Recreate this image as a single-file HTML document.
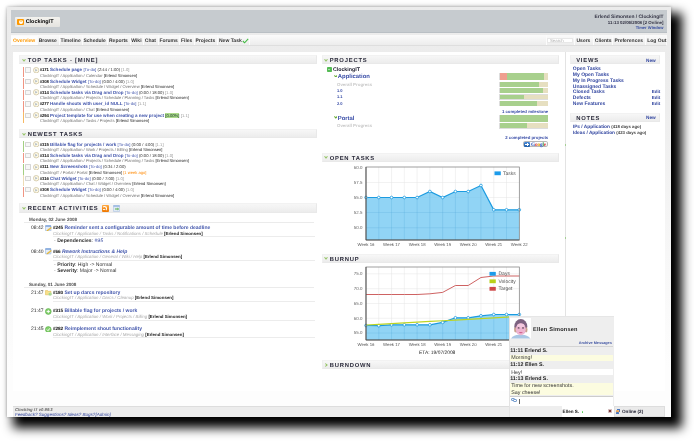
<!DOCTYPE html><html><head><meta charset="utf-8"><title>ClockingIT</title><style>
html,body{margin:0;padding:0;background:#fff;}
body{width:694px;height:441px;overflow:hidden;position:relative;font-family:"Liberation Sans",sans-serif;font-size:4.6px;color:#333;line-height:1.15;text-rendering:geometricPrecision;}
*{box-sizing:border-box;}
.abs,.abs>*{position:absolute;}
#page{position:absolute;left:7.3px;top:7.2px;width:663.5px;height:410.2px;background:linear-gradient(#ebebeb 0,#eeeeee 25%,#f7f7f7 60%,#fdfdfd 88%);box-shadow:8.75px 8.8px 10px 2.4px #000, 0 0 3px rgba(0,0,0,.3);}
#wrap{position:absolute;left:0;top:0;width:694px;height:441px;filter:blur(0.36px);}
#wrap div,#wrap span,#wrap svg{position:absolute;white-space:nowrap;}
#wrap span.i{position:static;}
.hd{background:#c6cbcf;border-bottom:0.5px solid #b9bfc4;}
.nav{background:linear-gradient(#fafafa,#ececec);border:0.4px solid #fafafa;border-bottom:0.6px solid #dedede;}
.tab{font-weight:bold;font-size:5px;color:#333;height:6px;line-height:6px;}
.sep{width:0.5px;background:#fbfbfb;top:35.5px;height:10px;}
.white{background:#fff;}
.sh{background:linear-gradient(#f7f7f7,#ececec);border:0.5px solid #e9e9e9;border-top-color:#f2f2f2;border-left-color:#f0f0f0;}
.st{font-weight:bold;font-size:5.85px;letter-spacing:0.78px;color:#2c2c3c;height:7px;line-height:7px;}
.arr{width:0;height:0;border-left:1.6px solid transparent;border-right:1.6px solid transparent;border-top:2px solid #6a3;}
.arr-r{width:0;height:0;border-top:1.6px solid transparent;border-bottom:1.6px solid transparent;border-left:2px solid #6a3;}
.tt{font-size:4.55px;height:6px;line-height:6px;font-weight:bold;color:#4256ac;}
.tt b{color:#111;font-size:0.94em;letter-spacing:-0.1px;}
.tt i{font-style:normal;font-weight:normal;font-size:4.2px;color:#333;}
.tt u{text-decoration:none;font-weight:normal;font-size:4.2px;color:#999;}
.ts{font-size:4.1px;height:5.4px;line-height:5.4px;color:#707070;}
.ts b{font-weight:normal;color:#222;}
.cb{border:0.5px solid #d6d6d6;background:#f7f7f7;border-radius:0.4px;}
.ck{width:5.2px;height:5.2px;border:0.6px solid #777;border-radius:50%;background:#f4f0d8;}
.bar{width:1px;height:10.6px;}
.lnk{font-size:5px;font-weight:bold;color:#3347a0;height:5.6px;line-height:5.6px;}
</style></head><body>
<div id="page"></div><div id="wrap">
<div class="hd" style="left:11px;top:10.2px;width:655.6px;height:22.5px;"></div>
<div class="" style="left:14.6px;top:16.8px;width:45.4px;height:10px;background:linear-gradient(#f3f2ee,#e4e3df);border-radius:1px;"></div>
<div class="" style="left:17.2px;top:18.6px;width:7px;height:6.5px;background:#f90;border-radius:1px;"><div style="left:1.6px;top:1.3px;width:3.8px;height:3.8px;border-radius:50%;background:#fff;"></div><div style="left:2.4px;top:1.5px;width:2.2px;height:1.6px;border-radius:50%;background:#fc6;"></div></div>
<div class="" style="left:25.7px;top:19px;font-weight:bold;font-size:5.4px;color:#000;letter-spacing:0.02px;font-family:"DejaVu Sans",sans-serif;">ClockingIT</div>
<div class="" style="right:30.5px;top:15px;font-weight:bold;font-size:4.9px;color:#334;">Erlend Simonsen / ClockingIT</div>
<div class="" style="right:30.5px;top:20px;font-weight:bold;font-size:4.4px;color:#334;">11:13 02/06/2008 [2 Online]</div>
<div class="" style="right:30.5px;top:26px;font-weight:bold;font-size:4.1px;color:#3a4fa0;">Timer Window</div>
<div class="nav" style="left:11px;top:35.2px;width:655.6px;height:10.4px;"></div>
<div class="" style="left:11.4px;top:35.6px;width:25.4px;height:9.6px;background:#fdfdfd;"></div>
<div class="tab" style="left:13px;top:38px;color:#f90;">Overview</div>
<div class="tab" style="left:38.75px;top:38px;">Browse</div>
<div class="tab" style="left:60.5px;top:38px;">Timeline</div>
<div class="tab" style="left:83.5px;top:38px;">Schedule</div>
<div class="tab" style="left:109px;top:38px;">Reports</div>
<div class="tab" style="left:131.3px;top:38px;">Wiki</div>
<div class="tab" style="left:144.8px;top:38px;">Chat</div>
<div class="tab" style="left:159.5px;top:38px;">Forums</div>
<div class="tab" style="left:181px;top:38px;">Files</div>
<div class="tab" style="left:195.5px;top:38px;">Projects</div>
<div class="tab" style="left:219px;top:38px;">New Task</div>
<div class="" style="left:36.8px;top:35.4px;width:0.6px;height:10px;background:#fcfcfc;"></div>
<div class="" style="left:58.7px;top:35.4px;width:0.6px;height:10px;background:#fcfcfc;"></div>
<div class="" style="left:81.7px;top:35.4px;width:0.6px;height:10px;background:#fcfcfc;"></div>
<div class="" style="left:107.4px;top:35.4px;width:0.6px;height:10px;background:#fcfcfc;"></div>
<div class="" style="left:129.6px;top:35.4px;width:0.6px;height:10px;background:#fcfcfc;"></div>
<div class="" style="left:143.4px;top:35.4px;width:0.6px;height:10px;background:#fcfcfc;"></div>
<div class="" style="left:157.8px;top:35.4px;width:0.6px;height:10px;background:#fcfcfc;"></div>
<div class="" style="left:179px;top:35.4px;width:0.6px;height:10px;background:#fcfcfc;"></div>
<div class="" style="left:193.8px;top:35.4px;width:0.6px;height:10px;background:#fcfcfc;"></div>
<div class="" style="left:217px;top:35.4px;width:0.6px;height:10px;background:#fcfcfc;"></div>
<div class="" style="left:248.8px;top:35.4px;width:0.6px;height:10px;background:#fcfcfc;"></div>
<div class="" style="left:545.5px;top:35.4px;width:0.6px;height:10px;background:#fcfcfc;"></div>
<div class="" style="left:574.3px;top:35.4px;width:0.6px;height:10px;background:#fcfcfc;"></div>
<div class="" style="left:592.8px;top:35.4px;width:0.6px;height:10px;background:#fcfcfc;"></div>
<div class="" style="left:612.3px;top:35.4px;width:0.6px;height:10px;background:#fcfcfc;"></div>
<div class="" style="left:644.5px;top:35.4px;width:0.6px;height:10px;background:#fcfcfc;"></div>
<svg style="left:241.6px;top:37.6px;width:7px;height:6px" viewBox="0 0 7 6"><path d="M0.8 3 L2.6 4.8 L6.2 0.9" fill="none" stroke="#4b4" stroke-width="1.1"/></svg>
<div class="" style="left:547.4px;top:38.2px;width:26px;height:4.9px;background:#fff;border:0.4px solid #e8e8e8;"><span class="i" style="font-size:4.3px;color:#adadad;position:absolute;left:1.6px;top:0px;line-height:4.2px">Search</span></div>
<div class="tab" style="left:576.5px;top:38px;">Users</div>
<div class="tab" style="left:594.8px;top:38px;">Clients</div>
<div class="tab" style="left:614.4px;top:38px;">Preferences</div>
<div class="tab" style="left:647.2px;top:38px;">Log Out</div>
<div class="white" style="left:13px;top:51.8px;width:552.5px;height:339.4px;"></div>
<div class="" style="left:564.8px;top:51.8px;width:1px;height:339.4px;background:#e3e3e3;"></div>
<div class="white" style="left:566px;top:51.8px;width:99px;height:339.4px;"></div>
<div class="sh" style="left:19.2px;top:54.8px;width:297.6px;height:9.4px;"></div>
<svg style="left:21.8px;top:58.5px;width:4px;height:3px" viewBox="0 0 4 3"><path d="M0.2 0.3 L2 1.1 L3.8 0.3 L2 2.6 Z" fill="#8cc05a" stroke="#8cc05a" stroke-width="0.3"/></svg>
<div class="st" style="left:27.7px;top:58px;">TOP TASKS - [MINE]</div>
<div class="sh" style="left:19.2px;top:129.0px;width:297.6px;height:9.4px;"></div>
<svg style="left:21.8px;top:132.7px;width:4px;height:3px" viewBox="0 0 4 3"><path d="M0.2 0.3 L2 1.1 L3.8 0.3 L2 2.6 Z" fill="#8cc05a" stroke="#8cc05a" stroke-width="0.3"/></svg>
<div class="st" style="left:27.7px;top:132px;">NEWEST TASKS</div>
<div class="sh" style="left:19.2px;top:203.4px;width:297.6px;height:9.4px;"></div>
<svg style="left:21.8px;top:207.1px;width:4px;height:3px" viewBox="0 0 4 3"><path d="M0.2 0.3 L2 1.1 L3.8 0.3 L2 2.6 Z" fill="#8cc05a" stroke="#8cc05a" stroke-width="0.3"/></svg>
<div class="st" style="left:27.7px;top:206px;">RECENT ACTIVITIES</div>
<div class="sh" style="left:321.5px;top:54.8px;width:237px;height:9.4px;"></div>
<svg style="left:324.1px;top:58.5px;width:4px;height:3px" viewBox="0 0 4 3"><path d="M0.2 0.3 L2 1.1 L3.8 0.3 L2 2.6 Z" fill="#8cc05a" stroke="#8cc05a" stroke-width="0.3"/></svg>
<div class="st" style="left:329.7px;top:58px;">PROJECTS</div>
<div class="sh" style="left:321.5px;top:152.7px;width:237px;height:9.4px;"></div>
<svg style="left:324.1px;top:156.4px;width:4px;height:3px" viewBox="0 0 4 3"><path d="M0.2 0.3 L2 1.1 L3.8 0.3 L2 2.6 Z" fill="#8cc05a" stroke="#8cc05a" stroke-width="0.3"/></svg>
<div class="st" style="left:329.7px;top:156px;">OPEN TASKS</div>
<div class="sh" style="left:321.5px;top:253.5px;width:237px;height:9.4px;"></div>
<svg style="left:324.1px;top:257.2px;width:4px;height:3px" viewBox="0 0 4 3"><path d="M0.2 0.3 L2 1.1 L3.8 0.3 L2 2.6 Z" fill="#8cc05a" stroke="#8cc05a" stroke-width="0.3"/></svg>
<div class="st" style="left:329.7px;top:257px;">BURNUP</div>
<div class="sh" style="left:321.5px;top:359.9px;width:237px;height:9.4px;"></div>
<svg style="left:324.9px;top:362.6px;width:3px;height:4px" viewBox="0 0 3 4"><path d="M0.3 0.2 L2.6 2 L0.3 3.8 L1.1 2 Z" fill="#8cc05a" stroke="#8cc05a" stroke-width="0.3"/></svg>
<div class="st" style="left:329.7px;top:363px;">BURNDOWN</div>
<div class="" style="left:22.5px;top:66.85px;width:1.7px;height:10.6px;background:#f09482;"></div>
<div class="cb" style="left:25.3px;top:67.35px;width:5.5px;height:5.3px;"></div>
<svg style="left:32.6px;top:66.75px;width:6.4px;height:6.4px" viewBox="0 0 6.4 6.4"><circle cx="3.2" cy="3.2" r="2.75" fill="#fffae6" stroke="#bcae86" stroke-width="0.55"/><path d="M2.5 2.2 L4.2 3.2 L2.5 4.2 Z" fill="#b4c4d4" stroke="#8a9cb0" stroke-width="0.3"/></svg>
<div class="tt" style="left:39.7px;top:67px;"><b>#171</b> Schedule page <i style="color:#4256ac">[To-do]</i> <i>(2:44 / 1:00)</i> <u>[1.0]</u></div>
<div class="ts" style="left:40px;top:73px;">ClockingIT / Application / Calendar <b>[Erlend Simonsen]</b></div>
<div class="" style="left:22.5px;top:78.21px;width:1.7px;height:10.6px;background:#f09482;"></div>
<div class="cb" style="left:25.3px;top:78.71px;width:5.5px;height:5.3px;"></div>
<svg style="left:32.6px;top:78.11px;width:6.4px;height:6.4px" viewBox="0 0 6.4 6.4"><circle cx="3.2" cy="3.2" r="2.75" fill="#fffae6" stroke="#bcae86" stroke-width="0.55"/><path d="M2.5 2.2 L4.2 3.2 L2.5 4.2 Z" fill="#b4c4d4" stroke="#8a9cb0" stroke-width="0.3"/></svg>
<div class="tt" style="left:39.7px;top:79px;"><b>#308</b> Schedule Widget <i style="color:#4256ac">[To-do]</i> <i>(0:00 / 4:00)</i> <u>[1.0]</u></div>
<div class="ts" style="left:40px;top:84px;">ClockingIT / Application / Schedule / Widget / Overview <b>[Erlend Simonsen]</b></div>
<div class="" style="left:22.5px;top:89.57px;width:1.7px;height:10.6px;background:#f09482;"></div>
<div class="cb" style="left:25.3px;top:90.07px;width:5.5px;height:5.3px;"></div>
<svg style="left:32.6px;top:89.47px;width:6.4px;height:6.4px" viewBox="0 0 6.4 6.4"><circle cx="3.2" cy="3.2" r="2.75" fill="#fffae6" stroke="#bcae86" stroke-width="0.55"/><path d="M2.5 2.2 L4.2 3.2 L2.5 4.2 Z" fill="#b4c4d4" stroke="#8a9cb0" stroke-width="0.3"/></svg>
<div class="tt" style="left:39.7px;top:90px;"><b>#314</b> Schedule tasks via Drag and Drop <i style="color:#4256ac">[To-do]</i> <i>(0:00 / 18:00)</i> <u>[1.0]</u></div>
<div class="ts" style="left:40px;top:95px;">ClockingIT / Application / Projects / Schedule / Planning / Tasks <b>[Erlend Simonsen]</b></div>
<div class="" style="left:22.5px;top:100.93px;width:1.7px;height:10.6px;background:#f09482;"></div>
<div class="cb" style="left:25.3px;top:101.43px;width:5.5px;height:5.3px;"></div>
<svg style="left:32.6px;top:100.83px;width:6.4px;height:6.4px" viewBox="0 0 6.4 6.4"><circle cx="3.2" cy="3.2" r="2.75" fill="#fffae6" stroke="#bcae86" stroke-width="0.55"/><path d="M2.5 2.2 L4.2 3.2 L2.5 4.2 Z" fill="#b4c4d4" stroke="#8a9cb0" stroke-width="0.3"/></svg>
<div class="tt" style="left:39.7px;top:101px;"><b>#277</b> Handle shouts with user_id NULL <i style="color:#4256ac">[To-do]</i> <u>[1.1]</u></div>
<div class="ts" style="left:40px;top:107px;">ClockingIT / Application / Chat <b>[Erlend Simonsen]</b></div>
<div class="" style="left:22.5px;top:112.29px;width:1.7px;height:10.6px;background:#f6b964;"></div>
<div class="cb" style="left:25.3px;top:112.79px;width:5.5px;height:5.3px;"></div>
<svg style="left:32.6px;top:112.19px;width:6.4px;height:6.4px" viewBox="0 0 6.4 6.4"><circle cx="3.2" cy="3.2" r="2.75" fill="#fffae6" stroke="#bcae86" stroke-width="0.55"/><path d="M2.5 2.2 L4.2 3.2 L2.5 4.2 Z" fill="#b4c4d4" stroke="#8a9cb0" stroke-width="0.3"/></svg>
<div class="tt" style="left:39.7px;top:113px;"><b>#294</b> Project template for use when creating a new project <i style="background:#addb8b;color:#243;">[0.00%]</i> <u>[1.1]</u></div>
<div class="ts" style="left:40px;top:118px;">ClockingIT / Application / Tasks / Projects <b>[Erlend Simonsen]</b></div>
<div class="" style="left:22.5px;top:141.2px;width:1.7px;height:10.6px;background:#a3cf82;"></div>
<div class="cb" style="left:25.3px;top:141.7px;width:5.5px;height:5.3px;"></div>
<svg style="left:32.6px;top:141.1px;width:6.4px;height:6.4px" viewBox="0 0 6.4 6.4"><circle cx="3.2" cy="3.2" r="2.75" fill="#fffae6" stroke="#bcae86" stroke-width="0.55"/><path d="M2.5 2.2 L4.2 3.2 L2.5 4.2 Z" fill="#b4c4d4" stroke="#8a9cb0" stroke-width="0.3"/></svg>
<div class="tt" style="left:39.7px;top:142px;"><b>#315</b> Billable flag for projects / work <i style="color:#4256ac">[To-do]</i> <i>(0:00 / 4:00)</i> <u>[1.1]</u></div>
<div class="ts" style="left:40px;top:147px;">ClockingIT / Application / Work / Projects / Billing <b>[Erlend Simonsen]</b></div>
<div class="" style="left:22.5px;top:152.56px;width:1.7px;height:10.6px;background:#f09482;"></div>
<div class="cb" style="left:25.3px;top:153.06px;width:5.5px;height:5.3px;"></div>
<svg style="left:32.6px;top:152.46px;width:6.4px;height:6.4px" viewBox="0 0 6.4 6.4"><circle cx="3.2" cy="3.2" r="2.75" fill="#fffae6" stroke="#bcae86" stroke-width="0.55"/><path d="M2.5 2.2 L4.2 3.2 L2.5 4.2 Z" fill="#b4c4d4" stroke="#8a9cb0" stroke-width="0.3"/></svg>
<div class="tt" style="left:39.7px;top:153px;"><b>#314</b> Schedule tasks via Drag and Drop <i style="color:#4256ac">[To-do]</i> <i>(0:00 / 18:00)</i> <u>[1.0]</u></div>
<div class="ts" style="left:40px;top:158px;">ClockingIT / Application / Projects / Schedule / Planning / Tasks <b>[Erlend Simonsen]</b></div>
<div class="" style="left:22.5px;top:163.92px;width:1.7px;height:10.6px;background:#a3cf82;"></div>
<div class="cb" style="left:25.3px;top:164.42px;width:5.5px;height:5.3px;"></div>
<svg style="left:32.6px;top:163.82px;width:6.4px;height:6.4px" viewBox="0 0 6.4 6.4"><circle cx="3.2" cy="3.2" r="2.75" fill="#fffae6" stroke="#bcae86" stroke-width="0.55"/><path d="M2.5 2.2 L4.2 3.2 L2.5 4.2 Z" fill="#b4c4d4" stroke="#8a9cb0" stroke-width="0.3"/></svg>
<div class="tt" style="left:39.7px;top:164px;"><b>#311</b> <em>New Screenshots</em> <i style="color:#4256ac">[To-do]</i> <i>(0:34 / 2:00)</i></div>
<div class="ts" style="left:40px;top:170px;">ClockingIT / Portal / Portal <b>[Erlend Simonsen]</b> <span class="i" style="color:#f80">[1 week ago]</span></div>
<div class="" style="left:22.5px;top:175.28px;width:1.7px;height:10.6px;background:#ecdcb6;"></div>
<div class="cb" style="left:25.3px;top:175.78px;width:5.5px;height:5.3px;"></div>
<svg style="left:32.6px;top:175.18px;width:6.4px;height:6.4px" viewBox="0 0 6.4 6.4"><circle cx="3.2" cy="3.2" r="2.75" fill="#fffae6" stroke="#bcae86" stroke-width="0.55"/><path d="M2.5 2.2 L4.2 3.2 L2.5 4.2 Z" fill="#b4c4d4" stroke="#8a9cb0" stroke-width="0.3"/></svg>
<div class="tt" style="left:39.7px;top:176px;"><b>#316</b> Chat Widget <i style="color:#4256ac">[To-do]</i> <i>(0:00 / 7:00)</i> <u>[1.0]</u></div>
<div class="ts" style="left:40px;top:181px;">ClockingIT / Application / Chat / Widget / Overview <b>[Erlend Simonsen]</b></div>
<div class="" style="left:22.5px;top:186.64px;width:1.7px;height:10.6px;background:#f09482;"></div>
<div class="cb" style="left:25.3px;top:187.14px;width:5.5px;height:5.3px;"></div>
<svg style="left:32.6px;top:186.54px;width:6.4px;height:6.4px" viewBox="0 0 6.4 6.4"><circle cx="3.2" cy="3.2" r="2.75" fill="#fffae6" stroke="#bcae86" stroke-width="0.55"/><path d="M2.5 2.2 L4.2 3.2 L2.5 4.2 Z" fill="#b4c4d4" stroke="#8a9cb0" stroke-width="0.3"/></svg>
<div class="tt" style="left:39.7px;top:187px;"><b>#308</b> Schedule Widget <i style="color:#4256ac">[To-do]</i> <i>(0:00 / 4:00)</i> <u>[1.0]</u></div>
<div class="ts" style="left:40px;top:193px;">ClockingIT / Application / Schedule / Widget / Overview <b>[Erlend Simonsen]</b></div>
<div class="" style="left:102px;top:204.7px;width:7px;height:7px;background:linear-gradient(#fa4,#e70);border-radius:1px;"><div style="left:1.2px;top:4.4px;width:1.4px;height:1.4px;border-radius:50%;background:#fff"></div><div style="left:0.2px;top:1.6px;width:5px;height:5px;border:0.8px solid #fff;border-radius:50%;border-left-color:transparent;border-bottom-color:transparent;transform:rotate(0deg)"></div></div>
<svg style="left:113px;top:205px;width:7px;height:7px" viewBox="0 0 7 7"><rect x="0.4" y="0.4" width="6.2" height="6.2" rx="0.6" fill="#dfe9f6" stroke="#9db7dc" stroke-width="0.5"/><rect x="0.4" y="0.4" width="6.2" height="1.3" fill="#8fb0de"/><path d="M2 3.6 H4.6 V2.6 L6 4.1 L4.6 5.6 V4.6 H2 Z" fill="#5bb04a"/></svg>
<div class="" style="left:29px;top:217px;font-size:4.6px;font-weight:bold;color:#555;">Monday, 02 June 2008</div>
<div class="" style="left:24px;top:221.8px;width:290px;height:0.5px;background:#ebebeb;"></div>
<div class="" style="left:31px;top:226px;font-size:5px;color:#222;">08:42</div>
<svg style="left:45px;top:224.9px;width:6.8px;height:6.6px" viewBox="0 0 6.8 6.6"><rect x="0.4" y="0.5" width="5.6" height="5.4" rx="0.5" fill="#e3edf9" stroke="#7fa3d6" stroke-width="0.5"/><rect x="0.4" y="0.5" width="5.6" height="1.2" fill="#6f9ad8"/><path d="M2 5.2 L5.8 2.2 L6.5 3 L2.8 5.9 L1.7 6.1 Z" fill="#f4c22e" stroke="#c8962a" stroke-width="0.25"/></svg>
<div class="tt" style="left:53px;top:225px;font-size:5px;"><b>#245</b> Reminder sent a configurable amount of time before deadline</div>
<div class="ts" style="left:53px;top:231px;font-size:4.38px;"><em style="color:#aaa">ClockingIT / Application / Tasks / Notifications / Schedule</em> <b style="font-weight:bold">[Erlend Simonsen]</b></div>
<div class="" style="left:53px;top:236.3px;width:262px;height:0.5px;background:#ececec;"></div>
<div class="" style="left:54px;top:239px;font-size:5.1px;color:#333;">- <b>Dependencies</b>: <span class="i" style="color:#3347a0;font-style:italic">#95</span></div>
<div class="" style="left:31px;top:250px;font-size:5px;color:#222;">08:40</div>
<svg style="left:45px;top:248.2px;width:6.8px;height:6.6px" viewBox="0 0 6.8 6.6"><rect x="0.4" y="0.5" width="5.6" height="5.4" rx="0.5" fill="#e3edf9" stroke="#7fa3d6" stroke-width="0.5"/><rect x="0.4" y="0.5" width="5.6" height="1.2" fill="#6f9ad8"/><path d="M2 5.2 L5.8 2.2 L6.5 3 L2.8 5.9 L1.7 6.1 Z" fill="#f4c22e" stroke="#c8962a" stroke-width="0.25"/></svg>
<div class="tt" style="left:53px;top:249px;font-size:5px;"><b>#66</b> <em>Rework Instructions &amp; Help</em></div>
<div class="ts" style="left:53px;top:254px;font-size:4.38px;"><em style="color:#aaa">ClockingIT / Application / General / Wiki / Help</em> <b style="font-weight:bold">[Erlend Simonsen]</b></div>
<div class="" style="left:53px;top:259.6px;width:262px;height:0.5px;background:#ececec;"></div>
<div class="" style="left:54px;top:263px;font-size:5.1px;color:#333;">- <b>Priority</b>: High -&gt; Normal</div>
<div class="" style="left:54px;top:269px;font-size:5.1px;color:#333;">- <b>Severity</b>: Major -&gt; Normal</div>
<div class="" style="left:29px;top:282px;font-size:4.6px;font-weight:bold;color:#555;">Sunday, 01 June 2008</div>
<div class="" style="left:24px;top:286.7px;width:290px;height:0.5px;background:#ebebeb;"></div>
<div class="" style="left:31px;top:291px;font-size:5px;color:#222;">21:47</div>
<svg style="left:45px;top:289.3px;width:7px;height:6.8px" viewBox="0 0 7 6.8"><path d="M0.4 1.6 H2.6 L3.2 2.3 H6 V5.8 H0.4 Z" fill="#f8e08a" stroke="#d9b13a" stroke-width="0.45"/><circle cx="5.1" cy="5" r="1.6" fill="#6cc04a" stroke="#fff" stroke-width="0.3"/><path d="M5.1 4.1 V5.9 M4.2 5 H6" stroke="#fff" stroke-width="0.5"/></svg>
<div class="tt" style="left:53px;top:290px;font-size:5px;"><b>#180</b> Set up darcs repository</div>
<div class="ts" style="left:53px;top:295px;font-size:4.38px;"><em style="color:#aaa">ClockingIT / Application / Darcs / Cleanup</em> <b style="font-weight:bold">[Erlend Simonsen]</b></div>
<div class="" style="left:53px;top:300.7px;width:262px;height:0.5px;background:#ececec;"></div>
<div class="" style="left:31px;top:309px;font-size:5px;color:#222;">21:47</div>
<svg style="left:45.1px;top:308.1px;width:6.8px;height:6.8px" viewBox="0 0 6.8 6.8"><circle cx="3.3" cy="3.5" r="2.9" fill="#86d070" stroke="#4fa83c" stroke-width="0.55"/><path d="M3.3 1.9 V5.1 M1.7 3.5 H4.9" stroke="#fff" stroke-width="0.9"/></svg>
<div class="tt" style="left:53px;top:308px;font-size:5px;"><b>#315</b> Billable flag for projects / work</div>
<div class="ts" style="left:53px;top:314px;font-size:4.38px;"><em style="color:#aaa">ClockingIT / Application / Work / Projects / Billing</em> <b style="font-weight:bold">[Erlend Simonsen]</b></div>
<div class="" style="left:53px;top:319.5px;width:262px;height:0.5px;background:#ececec;"></div>
<div class="" style="left:31px;top:327px;font-size:5px;color:#222;">21:45</div>
<svg style="left:45.1px;top:325.6px;width:6.8px;height:6.8px" viewBox="0 0 6.8 6.8"><circle cx="3.3" cy="3.5" r="2.9" fill="#86d070" stroke="#4fa83c" stroke-width="0.55"/><path d="M1.9 3.6 L3 4.7 L4.8 2.3" fill="none" stroke="#fff" stroke-width="0.9"/></svg>
<div class="tt" style="left:53px;top:326px;font-size:5px;"><b>#282</b> Reimplement shout functionality</div>
<div class="ts" style="left:53px;top:332px;font-size:4.38px;"><em style="color:#aaa">ClockingIT / Application / Interface / Messaging</em> <b style="font-weight:bold">[Erlend Simonsen]</b></div>
<div class="" style="left:53px;top:337px;width:262px;height:0.5px;background:#ececec;"></div>
<div class="" style="left:326.5px;top:67px;width:5px;height:5px;background:#5b5;border-radius:0.8px;"><div style="left:1.2px;top:1.6px;width:0;height:0;border-left:1.3px solid transparent;border-right:1.3px solid transparent;border-top:1.6px solid #fff"></div></div>
<div class="" style="left:332.9px;top:67px;font-weight:bold;font-size:5.3px;color:#223;">ClockingIT</div>
<svg style="left:333.7px;top:74.7px;width:3.6px;height:2.6px" viewBox="0 0 3.6 2.6"><path d="M0.4 0.4 L1.8 2 L3.2 0.4" fill="none" stroke="#6a3" stroke-width="1.05"/></svg>
<div class="" style="left:337.8px;top:74px;font-size:5.9px;font-weight:bold;color:#3b4fa8;">Application</div>
<div class="" style="left:337px;top:82px;font-size:4.4px;font-weight:bold;color:#c8c8c8;">Overall Progress</div>
<div class="" style="left:337px;top:89px;font-size:4px;font-weight:bold;color:#3b4fa8;">1.0</div>
<div class="" style="left:337px;top:95px;font-size:4px;font-weight:bold;color:#3b4fa8;">1.1</div>
<div class="" style="left:337px;top:102px;font-size:4px;font-weight:bold;color:#3b4fa8;">2.0</div>
<svg style="left:333.7px;top:116.4px;width:3.6px;height:2.6px" viewBox="0 0 3.6 2.6"><path d="M0.4 0.4 L1.8 2 L3.2 0.4" fill="none" stroke="#6a3" stroke-width="1.05"/></svg>
<div class="" style="left:337.8px;top:116px;font-size:5.9px;font-weight:bold;color:#3b4fa8;">Portal</div>
<div class="" style="left:337px;top:123px;font-size:4.4px;font-weight:bold;color:#c8c8c8;">Overall Progress</div>
<div class="" style="left:499.1px;top:72.6px;width:49px;height:7.8px;background:#ddd;"></div>
<div class="" style="left:499.5px;top:73px;width:7.0px;height:7px;background:#ef9f8f;"></div>
<div class="" style="left:506.5px;top:73px;width:37.299999999999955px;height:7px;background:#a8d08d;"></div>
<div class="" style="left:543.8px;top:73px;width:4.0px;height:7px;background:#e6dfc0;"></div>
<div class="" style="left:499.1px;top:81.6px;width:49px;height:5.3999999999999995px;background:#ddd;"></div>
<div class="" style="left:499.5px;top:82px;width:39.5px;height:4.6px;background:#a8d08d;"></div>
<div class="" style="left:539px;top:82px;width:8.799999999999955px;height:4.6px;background:#e6dfc0;"></div>
<div class="" style="left:499.1px;top:87.8px;width:49px;height:5.3999999999999995px;background:#ddd;"></div>
<div class="" style="left:499.5px;top:88.2px;width:43.5px;height:4.6px;background:#a8d08d;"></div>
<div class="" style="left:543px;top:88.2px;width:4.7999999999999545px;height:4.6px;background:#e6dfc0;"></div>
<div class="" style="left:499.1px;top:94.39999999999999px;width:49px;height:5.3999999999999995px;background:#ddd;"></div>
<div class="" style="left:499.5px;top:94.8px;width:24.799999999999955px;height:4.6px;background:#a8d08d;"></div>
<div class="" style="left:524.3px;top:94.8px;width:23.5px;height:4.6px;background:#e6dfc0;"></div>
<div class="" style="left:499.1px;top:100.89999999999999px;width:49px;height:5.3999999999999995px;background:#ddd;"></div>
<div class="" style="left:499.5px;top:101.3px;width:37.299999999999955px;height:4.6px;background:#a8d08d;"></div>
<div class="" style="left:536.8px;top:101.3px;width:11.0px;height:4.6px;background:#e6dfc0;"></div>
<div class="" style="right:145.79999999999995px;top:110px;font-size:4.3px;font-weight:bold;color:#3b4fa8;">1 completed milestone</div>
<div class="" style="left:499.1px;top:114.6px;width:49px;height:7.6px;background:#ddd;"></div>
<div class="" style="left:499.5px;top:115px;width:48.299999999999955px;height:6.8px;background:#a8d08d;"></div>
<div class="" style="left:499.1px;top:123.0px;width:49px;height:5.6px;background:#ddd;"></div>
<div class="" style="left:499.5px;top:123.4px;width:27.299999999999955px;height:4.8px;background:#a8d08d;"></div>
<div class="" style="left:526.8px;top:123.4px;width:21.0px;height:4.8px;background:#e6dfc0;"></div>
<div class="" style="right:145.79999999999995px;top:136px;font-size:4.3px;font-weight:bold;color:#3b4fa8;">2 completed projects</div>
<div class="" style="left:523px;top:140.5px;width:25.4px;height:6.9px;background:linear-gradient(#fff,#ececec);border:0.6px solid #b8b8b8;border-radius:1.8px;"><div style="left:0.2px;top:0.2px;width:5.6px;height:5.4px;background:linear-gradient(#4a8ad8,#1f5fa8);border-radius:1px"></div><div style="left:2.6px;top:1.2px;width:0.9px;height:3.4px;background:#fff"></div><div style="left:1.3px;top:2.45px;width:3.4px;height:0.9px;background:#fff"></div></div>
<div class="" style="left:530.9px;top:142px;font-size:5.3px;font-weight:bold;letter-spacing:-0.12px;font-family:'Liberation Serif',serif;"><span class="i" style="color:#2a56c6">G</span><span class="i" style="color:#d33">o</span><span class="i" style="color:#e8a800">o</span><span class="i" style="color:#2a56c6">g</span><span class="i" style="color:#2a9a3a">l</span><span class="i" style="color:#d33">e</span></div>
<div class="arr-r" style="left:565px;top:144px;width:0px;height:0px;border-left-color:#6b4;border-top-width:1.2px;border-bottom-width:1.2px;border-left-width:1.4px;"></div>
<div class="arr-r" style="left:565px;top:237.4px;width:0px;height:0px;border-left-color:#6b4;border-top-width:1.2px;border-bottom-width:1.2px;border-left-width:1.4px;"></div>
<svg style="left:335.5px;top:162px;width:213.29999999999995px;height:93px" viewBox="-30 -5 213.29999999999995 93"><rect x="0" y="0" width="153.29999999999995" height="73" fill="#fff"/><line x1="12.77" y1="0" x2="12.77" y2="73" stroke="#e4e4e4" stroke-width="0.5"/><line x1="25.55" y1="0" x2="25.55" y2="73" stroke="#e4e4e4" stroke-width="0.5"/><line x1="38.32" y1="0" x2="38.32" y2="73" stroke="#e4e4e4" stroke-width="0.5"/><line x1="51.10" y1="0" x2="51.10" y2="73" stroke="#e4e4e4" stroke-width="0.5"/><line x1="63.87" y1="0" x2="63.87" y2="73" stroke="#e4e4e4" stroke-width="0.5"/><line x1="76.65" y1="0" x2="76.65" y2="73" stroke="#e4e4e4" stroke-width="0.5"/><line x1="89.42" y1="0" x2="89.42" y2="73" stroke="#e4e4e4" stroke-width="0.5"/><line x1="102.20" y1="0" x2="102.20" y2="73" stroke="#e4e4e4" stroke-width="0.5"/><line x1="114.97" y1="0" x2="114.97" y2="73" stroke="#e4e4e4" stroke-width="0.5"/><line x1="127.75" y1="0" x2="127.75" y2="73" stroke="#e4e4e4" stroke-width="0.5"/><line x1="140.52" y1="0" x2="140.52" y2="73" stroke="#e4e4e4" stroke-width="0.5"/><line x1="0" y1="15.50" x2="153.29999999999995" y2="15.50" stroke="#e4e4e4" stroke-width="0.5"/><line x1="0" y1="30.50" x2="153.29999999999995" y2="30.50" stroke="#e4e4e4" stroke-width="0.5"/><line x1="0" y1="45.50" x2="153.29999999999995" y2="45.50" stroke="#e4e4e4" stroke-width="0.5"/><line x1="0" y1="60.70" x2="153.29999999999995" y2="60.70" stroke="#e4e4e4" stroke-width="0.5"/><polygon points="0,73 0.00,30.50 12.77,30.50 25.55,30.50 38.32,30.50 51.10,30.50 63.87,24.50 76.65,30.50 89.42,24.50 102.20,24.50 114.97,18.50 127.75,42.80 140.52,42.80 153.30,42.80 153.29999999999995,73" fill="#6cc6f2" fill-opacity="0.75"/><line x1="12.77" y1="30.50" x2="12.77" y2="73" stroke="#2a8fd0" stroke-opacity="0.28" stroke-width="0.5"/><line x1="25.55" y1="30.50" x2="25.55" y2="73" stroke="#2a8fd0" stroke-opacity="0.28" stroke-width="0.5"/><line x1="38.32" y1="30.50" x2="38.32" y2="73" stroke="#2a8fd0" stroke-opacity="0.28" stroke-width="0.5"/><line x1="51.10" y1="30.50" x2="51.10" y2="73" stroke="#2a8fd0" stroke-opacity="0.28" stroke-width="0.5"/><line x1="63.87" y1="24.50" x2="63.87" y2="73" stroke="#2a8fd0" stroke-opacity="0.28" stroke-width="0.5"/><line x1="76.65" y1="30.50" x2="76.65" y2="73" stroke="#2a8fd0" stroke-opacity="0.28" stroke-width="0.5"/><line x1="89.42" y1="24.50" x2="89.42" y2="73" stroke="#2a8fd0" stroke-opacity="0.28" stroke-width="0.5"/><line x1="102.20" y1="24.50" x2="102.20" y2="73" stroke="#2a8fd0" stroke-opacity="0.28" stroke-width="0.5"/><line x1="114.97" y1="18.50" x2="114.97" y2="73" stroke="#2a8fd0" stroke-opacity="0.28" stroke-width="0.5"/><line x1="127.75" y1="42.80" x2="127.75" y2="73" stroke="#2a8fd0" stroke-opacity="0.28" stroke-width="0.5"/><line x1="140.52" y1="42.80" x2="140.52" y2="73" stroke="#2a8fd0" stroke-opacity="0.28" stroke-width="0.5"/><line x1="0" y1="45.50" x2="153.29999999999995" y2="45.50" stroke="#2a8fd0" stroke-opacity="0.22" stroke-width="0.5"/><line x1="0" y1="60.70" x2="153.29999999999995" y2="60.70" stroke="#2a8fd0" stroke-opacity="0.22" stroke-width="0.5"/><polyline points="0.00,30.50 12.77,30.50 25.55,30.50 38.32,30.50 51.10,30.50 63.87,24.50 76.65,30.50 89.42,24.50 102.20,24.50 114.97,18.50 127.75,42.80 140.52,42.80 153.30,42.80" fill="none" stroke="#1c9be0" stroke-width="1.2"/><circle cx="0.00" cy="30.50" r="1.35" fill="#fff" stroke="#1c9be0" stroke-width="0.8"/><circle cx="12.77" cy="30.50" r="1.35" fill="#fff" stroke="#1c9be0" stroke-width="0.8"/><circle cx="25.55" cy="30.50" r="1.35" fill="#fff" stroke="#1c9be0" stroke-width="0.8"/><circle cx="38.32" cy="30.50" r="1.35" fill="#fff" stroke="#1c9be0" stroke-width="0.8"/><circle cx="51.10" cy="30.50" r="1.35" fill="#fff" stroke="#1c9be0" stroke-width="0.8"/><circle cx="63.87" cy="24.50" r="1.35" fill="#fff" stroke="#1c9be0" stroke-width="0.8"/><circle cx="76.65" cy="30.50" r="1.35" fill="#fff" stroke="#1c9be0" stroke-width="0.8"/><circle cx="89.42" cy="24.50" r="1.35" fill="#fff" stroke="#1c9be0" stroke-width="0.8"/><circle cx="102.20" cy="24.50" r="1.35" fill="#fff" stroke="#1c9be0" stroke-width="0.8"/><circle cx="114.97" cy="18.50" r="1.35" fill="#fff" stroke="#1c9be0" stroke-width="0.8"/><circle cx="127.75" cy="42.80" r="1.35" fill="#fff" stroke="#1c9be0" stroke-width="0.8"/><circle cx="140.52" cy="42.80" r="1.35" fill="#fff" stroke="#1c9be0" stroke-width="0.8"/><circle cx="153.30" cy="42.80" r="1.35" fill="#fff" stroke="#1c9be0" stroke-width="0.8"/><rect x="0" y="0" width="153.29999999999995" height="73" fill="none" stroke="#777" stroke-width="0.7"/><path d="M0 0 V73 H153.29999999999995" fill="none" stroke="#444" stroke-width="0.8"/><text x="-3.6" y="1.50" font-size="4.4" fill="#666" text-anchor="end" font-family="Liberation Sans, sans-serif">60.0</text><text x="-3.6" y="17.00" font-size="4.4" fill="#666" text-anchor="end" font-family="Liberation Sans, sans-serif">57.5</text><text x="-3.6" y="32.00" font-size="4.4" fill="#666" text-anchor="end" font-family="Liberation Sans, sans-serif">55.0</text><text x="-3.6" y="47.00" font-size="4.4" fill="#666" text-anchor="end" font-family="Liberation Sans, sans-serif">52.5</text><text x="-3.6" y="62.20" font-size="4.4" fill="#666" text-anchor="end" font-family="Liberation Sans, sans-serif">50.0</text><text x="0.00" y="78.60" font-size="4.3" fill="#555" text-anchor="middle" font-family="Liberation Sans, sans-serif">Week 16</text><text x="25.55" y="78.60" font-size="4.3" fill="#555" text-anchor="middle" font-family="Liberation Sans, sans-serif">Week 17</text><text x="51.10" y="78.60" font-size="4.3" fill="#555" text-anchor="middle" font-family="Liberation Sans, sans-serif">Week 18</text><text x="76.65" y="78.60" font-size="4.3" fill="#555" text-anchor="middle" font-family="Liberation Sans, sans-serif">Week 19</text><text x="102.20" y="78.60" font-size="4.3" fill="#555" text-anchor="middle" font-family="Liberation Sans, sans-serif">Week 20</text><text x="127.75" y="78.60" font-size="4.3" fill="#555" text-anchor="middle" font-family="Liberation Sans, sans-serif">Week 21</text><text x="153.30" y="78.60" font-size="4.3" fill="#555" text-anchor="middle" font-family="Liberation Sans, sans-serif">Week 22</text><rect x="128.5" y="4.40" width="6.3" height="3.8" fill="#1c9bea"/><text x="137.0" y="7.80" font-size="5" fill="#555" font-family="Liberation Sans, sans-serif">Tasks</text></svg>
<svg style="left:335.5px;top:262px;width:213.29999999999995px;height:93px" viewBox="-30 -5 213.29999999999995 93"><rect x="0" y="0" width="153.29999999999995" height="73" fill="#fff"/><line x1="12.77" y1="0" x2="12.77" y2="73" stroke="#e4e4e4" stroke-width="0.5"/><line x1="25.55" y1="0" x2="25.55" y2="73" stroke="#e4e4e4" stroke-width="0.5"/><line x1="38.32" y1="0" x2="38.32" y2="73" stroke="#e4e4e4" stroke-width="0.5"/><line x1="51.10" y1="0" x2="51.10" y2="73" stroke="#e4e4e4" stroke-width="0.5"/><line x1="63.87" y1="0" x2="63.87" y2="73" stroke="#e4e4e4" stroke-width="0.5"/><line x1="76.65" y1="0" x2="76.65" y2="73" stroke="#e4e4e4" stroke-width="0.5"/><line x1="89.42" y1="0" x2="89.42" y2="73" stroke="#e4e4e4" stroke-width="0.5"/><line x1="102.20" y1="0" x2="102.20" y2="73" stroke="#e4e4e4" stroke-width="0.5"/><line x1="114.97" y1="0" x2="114.97" y2="73" stroke="#e4e4e4" stroke-width="0.5"/><line x1="127.75" y1="0" x2="127.75" y2="73" stroke="#e4e4e4" stroke-width="0.5"/><line x1="140.52" y1="0" x2="140.52" y2="73" stroke="#e4e4e4" stroke-width="0.5"/><line x1="0" y1="6.80" x2="153.29999999999995" y2="6.80" stroke="#e4e4e4" stroke-width="0.5"/><line x1="0" y1="21.70" x2="153.29999999999995" y2="21.70" stroke="#e4e4e4" stroke-width="0.5"/><line x1="0" y1="36.50" x2="153.29999999999995" y2="36.50" stroke="#e4e4e4" stroke-width="0.5"/><line x1="0" y1="51.30" x2="153.29999999999995" y2="51.30" stroke="#e4e4e4" stroke-width="0.5"/><line x1="0" y1="66.00" x2="153.29999999999995" y2="66.00" stroke="#e4e4e4" stroke-width="0.5"/><polygon points="0,73 0.00,58.50 12.77,58.70 25.55,57.80 38.32,57.80 51.10,57.80 63.87,57.80 76.65,55.40 89.42,50.80 102.20,50.80 114.97,48.80 127.75,47.50 140.52,47.50 153.30,47.50 153.29999999999995,73" fill="#6cc6f2" fill-opacity="0.75"/><line x1="12.77" y1="58.70" x2="12.77" y2="73" stroke="#2a8fd0" stroke-opacity="0.28" stroke-width="0.5"/><line x1="25.55" y1="57.80" x2="25.55" y2="73" stroke="#2a8fd0" stroke-opacity="0.28" stroke-width="0.5"/><line x1="38.32" y1="57.80" x2="38.32" y2="73" stroke="#2a8fd0" stroke-opacity="0.28" stroke-width="0.5"/><line x1="51.10" y1="57.80" x2="51.10" y2="73" stroke="#2a8fd0" stroke-opacity="0.28" stroke-width="0.5"/><line x1="63.87" y1="57.80" x2="63.87" y2="73" stroke="#2a8fd0" stroke-opacity="0.28" stroke-width="0.5"/><line x1="76.65" y1="55.40" x2="76.65" y2="73" stroke="#2a8fd0" stroke-opacity="0.28" stroke-width="0.5"/><line x1="89.42" y1="50.80" x2="89.42" y2="73" stroke="#2a8fd0" stroke-opacity="0.28" stroke-width="0.5"/><line x1="102.20" y1="50.80" x2="102.20" y2="73" stroke="#2a8fd0" stroke-opacity="0.28" stroke-width="0.5"/><line x1="114.97" y1="48.80" x2="114.97" y2="73" stroke="#2a8fd0" stroke-opacity="0.28" stroke-width="0.5"/><line x1="127.75" y1="47.50" x2="127.75" y2="73" stroke="#2a8fd0" stroke-opacity="0.28" stroke-width="0.5"/><line x1="140.52" y1="47.50" x2="140.52" y2="73" stroke="#2a8fd0" stroke-opacity="0.28" stroke-width="0.5"/><line x1="0" y1="66.00" x2="153.29999999999995" y2="66.00" stroke="#2a8fd0" stroke-opacity="0.22" stroke-width="0.5"/><polyline points="0.00,58.50 12.77,58.70 25.55,57.80 38.32,57.80 51.10,57.80 63.87,57.80 76.65,55.40 89.42,50.80 102.20,50.80 114.97,48.80 127.75,47.50 140.52,47.50 153.30,47.50" fill="none" stroke="#1c9be0" stroke-width="1.2"/><circle cx="0.00" cy="58.50" r="1.35" fill="#fff" stroke="#1c9be0" stroke-width="0.8"/><circle cx="12.77" cy="58.70" r="1.35" fill="#fff" stroke="#1c9be0" stroke-width="0.8"/><circle cx="25.55" cy="57.80" r="1.35" fill="#fff" stroke="#1c9be0" stroke-width="0.8"/><circle cx="38.32" cy="57.80" r="1.35" fill="#fff" stroke="#1c9be0" stroke-width="0.8"/><circle cx="51.10" cy="57.80" r="1.35" fill="#fff" stroke="#1c9be0" stroke-width="0.8"/><circle cx="63.87" cy="57.80" r="1.35" fill="#fff" stroke="#1c9be0" stroke-width="0.8"/><circle cx="76.65" cy="55.40" r="1.35" fill="#fff" stroke="#1c9be0" stroke-width="0.8"/><circle cx="89.42" cy="50.80" r="1.35" fill="#fff" stroke="#1c9be0" stroke-width="0.8"/><circle cx="102.20" cy="50.80" r="1.35" fill="#fff" stroke="#1c9be0" stroke-width="0.8"/><circle cx="114.97" cy="48.80" r="1.35" fill="#fff" stroke="#1c9be0" stroke-width="0.8"/><circle cx="127.75" cy="47.50" r="1.35" fill="#fff" stroke="#1c9be0" stroke-width="0.8"/><circle cx="140.52" cy="47.50" r="1.35" fill="#fff" stroke="#1c9be0" stroke-width="0.8"/><circle cx="153.30" cy="47.50" r="1.35" fill="#fff" stroke="#1c9be0" stroke-width="0.8"/><polyline points="0.00,58.00 12.77,57.29 25.55,56.58 38.32,55.88 51.10,55.17 63.87,54.46 76.65,53.75 89.42,53.04 102.20,52.33 114.97,51.62 127.75,50.92 140.52,50.21 153.30,49.50" fill="none" stroke="#bdd424" stroke-width="1.2"/><polyline points="0.00,27.50 12.77,27.50 25.55,27.50 38.32,27.50 51.10,27.50 63.87,26.80 76.65,25.40 89.42,18.50 102.20,18.50 114.97,10.50 127.75,9.00 140.52,9.00 153.30,9.00" fill="none" stroke="#c85050" stroke-width="0.9"/><rect x="0" y="0" width="153.29999999999995" height="73" fill="none" stroke="#777" stroke-width="0.7"/><path d="M0 0 V73 H153.29999999999995" fill="none" stroke="#444" stroke-width="0.8"/><text x="-3.6" y="8.30" font-size="4.4" fill="#666" text-anchor="end" font-family="Liberation Sans, sans-serif">75.0</text><text x="-3.6" y="23.20" font-size="4.4" fill="#666" text-anchor="end" font-family="Liberation Sans, sans-serif">70.0</text><text x="-3.6" y="38.00" font-size="4.4" fill="#666" text-anchor="end" font-family="Liberation Sans, sans-serif">65.0</text><text x="-3.6" y="52.80" font-size="4.4" fill="#666" text-anchor="end" font-family="Liberation Sans, sans-serif">60.0</text><text x="-3.6" y="67.50" font-size="4.4" fill="#666" text-anchor="end" font-family="Liberation Sans, sans-serif">55.0</text><text x="0.00" y="78.60" font-size="4.3" fill="#555" text-anchor="middle" font-family="Liberation Sans, sans-serif">Week 16</text><text x="25.55" y="78.60" font-size="4.3" fill="#555" text-anchor="middle" font-family="Liberation Sans, sans-serif">Week 17</text><text x="51.10" y="78.60" font-size="4.3" fill="#555" text-anchor="middle" font-family="Liberation Sans, sans-serif">Week 18</text><text x="76.65" y="78.60" font-size="4.3" fill="#555" text-anchor="middle" font-family="Liberation Sans, sans-serif">Week 19</text><text x="102.20" y="78.60" font-size="4.3" fill="#555" text-anchor="middle" font-family="Liberation Sans, sans-serif">Week 20</text><text x="127.75" y="78.60" font-size="4.3" fill="#555" text-anchor="middle" font-family="Liberation Sans, sans-serif">Week 21</text><text x="153.30" y="78.60" font-size="4.3" fill="#555" text-anchor="middle" font-family="Liberation Sans, sans-serif">Week 22</text><rect x="123.5" y="4.90" width="6.3" height="3.8" fill="#1c9bea"/><text x="132.5" y="8.30" font-size="5" fill="#555" font-family="Liberation Sans, sans-serif">Days</text><rect x="123.5" y="12.40" width="6.3" height="3.8" fill="#b9d11a"/><text x="132.5" y="15.80" font-size="5" fill="#555" font-family="Liberation Sans, sans-serif">Velocity</text><rect x="123.5" y="19.90" width="6.3" height="3.8" fill="#cf4848"/><text x="132.5" y="23.30" font-size="5" fill="#555" font-family="Liberation Sans, sans-serif">Target</text></svg>
<div class="" style="left:419px;top:351px;font-size:4.9px;color:#222;">ETA: 19/07/2008</div>
<div class="sh" style="left:570px;top:54.8px;width:90.4px;height:9.4px;"></div>
<div class="st" style="left:576.2px;top:58px;">VIEWS</div>
<div class="lnk" style="right:38.299999999999955px;top:58px;font-size:4.7px;">New</div>
<div class="lnk" style="left:572.8px;top:67px;">Open Tasks</div>
<div class="lnk" style="left:572.8px;top:73px;">My Open Tasks</div>
<div class="lnk" style="left:572.8px;top:79px;">My In Progress Tasks</div>
<div class="lnk" style="left:572.8px;top:85px;">Unassigned Tasks</div>
<div class="lnk" style="left:572.8px;top:90px;">Closed Tasks</div>
<div class="lnk" style="right:33.799999999999955px;top:89px;font-size:4.5px;">Edit</div>
<div class="lnk" style="left:572.8px;top:96px;">Defects</div>
<div class="lnk" style="right:33.799999999999955px;top:95px;font-size:4.5px;">Edit</div>
<div class="lnk" style="left:572.8px;top:102px;">New Features</div>
<div class="lnk" style="right:33.799999999999955px;top:101px;font-size:4.5px;">Edit</div>
<div class="sh" style="left:570px;top:112.7px;width:90.4px;height:9.4px;"></div>
<div class="st" style="left:576.2px;top:116px;">NOTES</div>
<div class="lnk" style="right:38.299999999999955px;top:115px;font-size:4.7px;">New</div>
<div class="lnk" style="left:572.8px;top:124px;font-size:4.8px;">IPs / Application <span class="i" style="font-size:4.3px;color:#444">(418 days ago)</span></div>
<div class="lnk" style="left:572.8px;top:130px;font-size:4.8px;">Ideas / Application <span class="i" style="font-size:4.3px;color:#444">(423 days ago)</span></div>
<div class="" style="left:13px;top:405.8px;width:652px;height:11.6px;background:#ececec;border-top:0.4px solid #ddd;overflow:hidden;"></div>
<div class="" style="left:15px;top:408px;font-size:4.2px;font-style:italic;font-weight:bold;color:#666;">Clocking IT v0.99.3</div>
<div class="" style="left:15px;top:412px;font-size:4.55px;font-style:italic;color:#3347a0;">Feedback? Suggestions? Ideas? Bugs?[Admin]</div>
<div class="" style="left:509px;top:316.3px;width:104.6px;height:100.9px;background:#eee;border-left:0.4px solid #e2e2e2;border-top:0.4px solid #e6e6e6;"></div>
<svg style="left:510.3px;top:318.4px;width:21px;height:20.5px" viewBox="0 0 21 20.5"><rect width="21" height="20.5" fill="#fff"/><path d="M1 20.5 C3 17.5 7 16.4 10.6 17 C14 16.4 18 17.5 20.4 20.5 Z" fill="#a9c6e4"/><ellipse cx="10.8" cy="8.6" rx="6.5" ry="7.6" fill="#7d6280"/><ellipse cx="5.4" cy="11.8" rx="1.3" ry="2.6" fill="#c9a08c"/><ellipse cx="16.2" cy="11.8" rx="1.3" ry="2.6" fill="#c9a08c"/><ellipse cx="10.8" cy="11.2" rx="5" ry="6" fill="#eeb4d0"/><ellipse cx="10.8" cy="7.6" rx="3.6" ry="2" fill="#f3c8de"/><ellipse cx="8.6" cy="9.9" rx="1" ry="0.55" fill="#4a3a4a"/><ellipse cx="13" cy="9.9" rx="1" ry="0.55" fill="#4a3a4a"/><ellipse cx="10.8" cy="14.6" rx="1.9" ry="0.7" fill="#cf5f8c"/></svg>
<div class="" style="left:533px;top:327px;font-weight:bold;font-size:5.6px;letter-spacing:0.22px;color:#222;">Ellen Simonsen</div>
<div class="" style="right:82.20000000000005px;top:341px;font-weight:bold;font-size:3.8px;color:#3a4fa0;">Archive Messages</div>
<div class="" style="left:510px;top:346.4px;width:102.6px;height:0.4px;background:#d4d4d4;"></div>
<div class="" style="left:510.2px;top:348px;font-weight:bold;font-size:5.3px;color:#222;">11:11 Erlend S.</div>
<div class="" style="left:510px;top:354.5px;width:102.6px;height:6.9px;background:#fcfce0;"></div>
<div class="" style="left:511.2px;top:355px;font-size:5.35px;color:#333;">Morning!</div>
<div class="" style="left:510.2px;top:362px;font-weight:bold;font-size:5.3px;color:#222;">11:12 Ellen S.</div>
<div class="" style="left:510px;top:368.7px;width:102.6px;height:6.7px;background:#fff;"></div>
<div class="" style="left:511.2px;top:370px;font-size:5.35px;color:#333;">Hey!</div>
<div class="" style="left:510.2px;top:376px;font-weight:bold;font-size:5.3px;color:#222;">11:13 Erlend S.</div>
<div class="" style="left:510px;top:382.6px;width:102.6px;height:12.8px;background:#fcfce0;"></div>
<div class="" style="left:511.2px;top:383px;font-size:5.35px;color:#333;">Time for new screenshots.</div>
<div class="" style="left:511.2px;top:390px;font-size:5.35px;color:#333;">Say cheese!</div>
<div class="" style="left:510px;top:396.4px;width:102.6px;height:9.4px;background:#fff;border-top:0.4px solid #ccc;"></div>
<div class="" style="left:511.2px;top:397.6px;width:4px;height:3px;border:0.5px solid #7aa0d0;border-radius:1px;background:#eef4fb;"></div>
<div class="" style="left:513.2px;top:399.4px;width:4px;height:3px;border:0.5px solid #7aa0d0;border-radius:1px;background:#fff;"></div>
<div class="" style="left:518.6px;top:398.6px;width:0.35px;height:5px;background:#666;"></div>
<div class="" style="left:561.5px;top:406px;width:52px;height:11.2px;background:#fff;"></div>
<div class="" style="left:562.6px;top:409px;font-weight:bold;font-size:4.6px;color:#222;">Ellen S.</div>
<div class="" style="left:581.6px;top:411.3px;width:1.6px;height:1.6px;background:#5c5;border-radius:50%;"></div>
<div class="" style="left:607.8px;top:409px;font-size:5.4px;color:#733;">&#10006;</div>
<div class="" style="left:614px;top:406px;width:51px;height:11.2px;background:#eaeaea;border:0.4px solid #ddd;"></div>
<div class="" style="left:616px;top:408.6px;width:4.4px;height:5.4px;"><div style="left:1.4px;top:0;width:3px;height:3.4px;border:0.5px solid #4a78c0;background:#dde8f6"></div><div style="left:0.4px;top:1.8px;width:2.2px;height:2.2px;border-radius:50%;background:#e9a35a"></div><div style="left:0;top:3.6px;width:3px;height:1.8px;background:#4a78c0;border-radius:1px 1px 0 0"></div></div>
<div class="" style="left:622px;top:409px;font-weight:bold;font-size:4.6px;color:#223;">Online (2)</div>
</div></body></html>
